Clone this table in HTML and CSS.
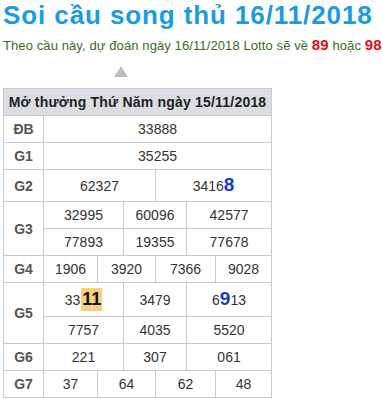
FILE: index.html
```html
<!DOCTYPE html>
<html lang="vi">
<head>
<meta charset="utf-8">
<link rel="stylesheet" href="styles.css">
</head>
<body>
<h1 class="title">Soi cầu song thủ 16/11/2018</h1>
<p class="predict">Theo cầu này, dự đoán ngày 16/11/2018 Lotto sẽ về <b class="hot">89</b> hoặc <b class="hot">98</b></p>
<div class="arrow-row"><span class="arrow"></span></div>
<table class="result">
  <colgroup>
    <col class="c-label">
    <col class="c1"><col class="c2"><col class="c3"><col class="c4"><col class="c5"><col class="c6">
  </colgroup>
  <tr><th colspan="7" class="head">Mở thưởng Thứ Năm ngày 15/11/2018</th></tr>
  <tr><td class="lbl">ĐB</td><td colspan="6">33888</td></tr>
  <tr><td class="lbl">G1</td><td colspan="6">35255</td></tr>
  <tr class="tall"><td class="lbl">G2</td><td colspan="3">62327</td><td colspan="3">3416<b class="pick big8">8</b></td></tr>
  <tr><td class="lbl" rowspan="2">G3</td><td colspan="2">32995</td><td colspan="2">60096</td><td colspan="2">42577</td></tr>
  <tr><td colspan="2">77893</td><td colspan="2">19355</td><td colspan="2">77678</td></tr>
  <tr><td class="lbl">G4</td><td>1906</td><td colspan="2">3920</td><td colspan="2">7366</td><td>9028</td></tr>
  <tr class="taller"><td class="lbl" rowspan="2">G5</td><td colspan="2">33<b class="mark">11</b></td><td colspan="2">3479</td><td colspan="2">6<b class="pick big9">9</b>13</td></tr>
  <tr><td colspan="2">7757</td><td colspan="2">4035</td><td colspan="2">5520</td></tr>
  <tr><td class="lbl">G6</td><td colspan="2">221</td><td colspan="2">307</td><td colspan="2">061</td></tr>
  <tr><td class="lbl">G7</td><td>37</td><td colspan="2">64</td><td colspan="2">62</td><td>48</td></tr>
</table>
</body>
</html>
```

FILE: styles.css
```css
html, body {
  margin: 0;
  padding: 0;
  background: #fff;
}
body {
  padding: 0 3px;
  font-family: "Liberation Sans", Arial, sans-serif;
  color: #222;
}
.title {
  margin: 0;
  font-size: 26px;
  letter-spacing: 0.9px;
  line-height: 30px;
  font-weight: bold;
  color: #1b9be0;
  white-space: nowrap;
}
.predict {
  margin: 5px 0 0;
  font-size: 13px;
  letter-spacing: 0.1px;
  line-height: 20px;
  color: #3a6a1f;
  white-space: nowrap;
}
.hot {
  color: #e01010;
  font-size: 15px;
}
.arrow-row {
  display: flex;
  height: 32px;
  padding-left: 111px;
  padding-top: 10px;
  box-sizing: border-box;
}
.arrow {
  width: 0;
  height: 0;
  border-left: 7.5px solid transparent;
  border-right: 7.5px solid transparent;
  border-bottom: 11px solid #bdbdbd;
}
.result {
  border-collapse: collapse;
  table-layout: fixed;
  width: 268px;
  font-size: 14px;
}
.c-label { width: 40px; }
.c1 { width: 54px; }
.c2 { width: 26px; }
.c3 { width: 32px; }
.c4 { width: 31px; }
.c5 { width: 29px; }
.c6 { width: 56px; }
.result th, .result td {
  border: 1px solid #c9c9d1;
  text-align: center;
  padding: 0;
  height: 26px;
  line-height: 16px;
  white-space: nowrap;
}
.result .head {
  background: #dcdde3;
  font-size: 14px;
  letter-spacing: 0.2px;
  font-weight: bold;
  color: #222;
}
.result td {
  color: #333;
}
.result .lbl {
  font-weight: bold;
  color: #555;
}
.tall td { height: 31px; }
.taller td { height: 33px; }
.pick {
  color: #1639cf;
}
.big8 { font-size: 19px; }
.big9 { font-size: 19px; }
.mark {
  display: inline-block;
  background: #f8d07e;
  color: #111;
  font-size: 18px;
  line-height: 23px;
  padding: 0 1px;
  margin-left: 1px;
}
```
